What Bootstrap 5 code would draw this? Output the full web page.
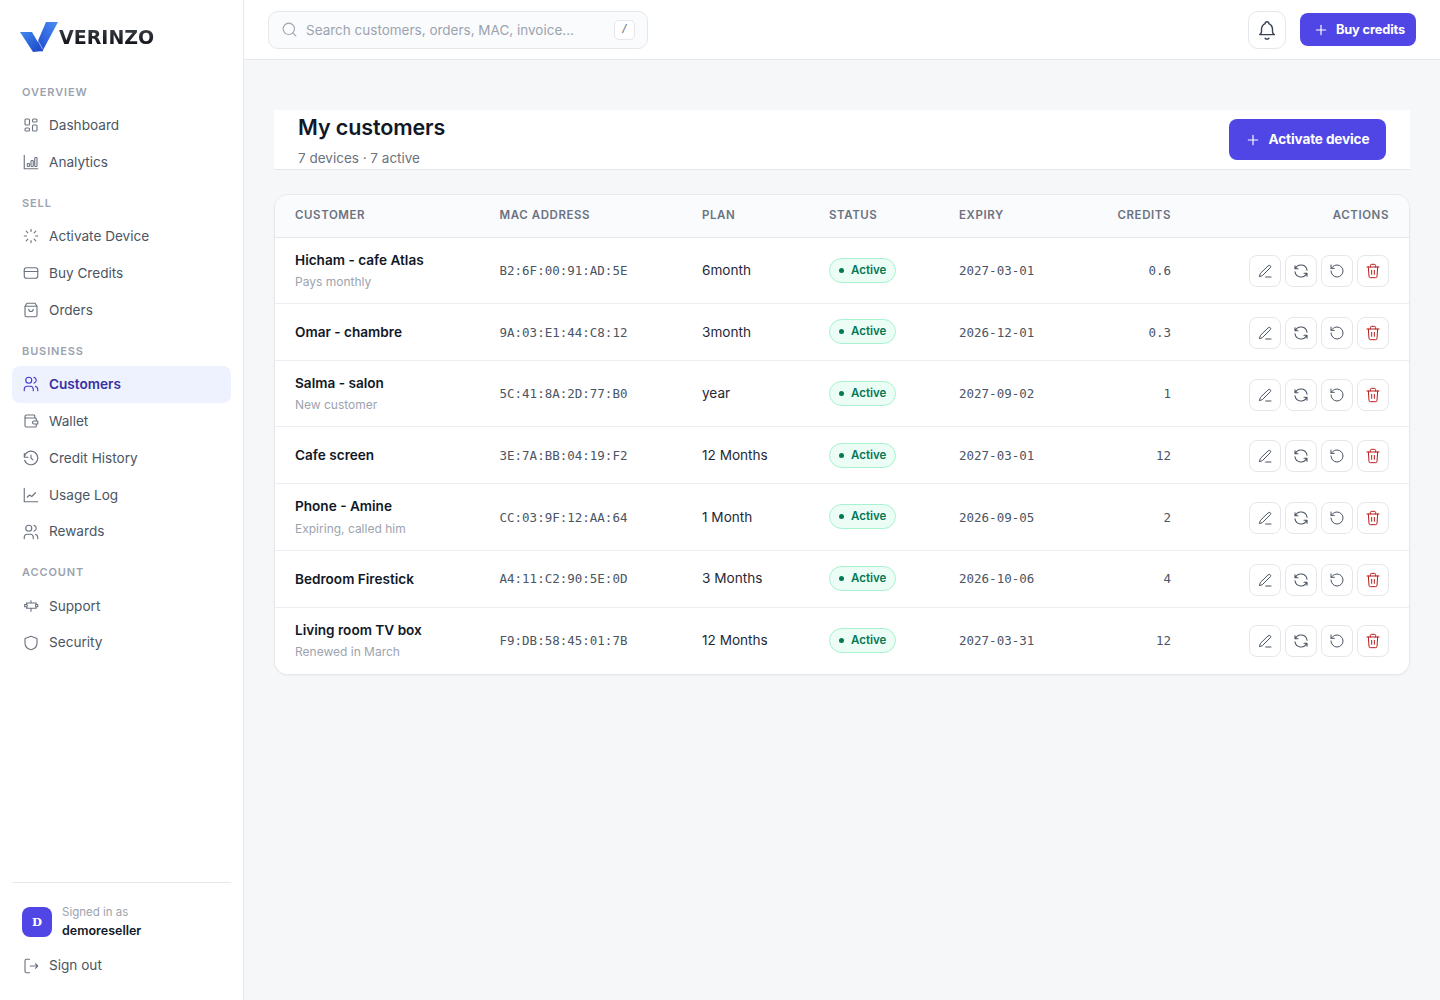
<!DOCTYPE html>
<html lang="en">
<head>
    <meta charset="UTF-8">
    <meta name="viewport" content="width=device-width, initial-scale=1.0">
    <title>My customers</title>
    <link href="https://cdn.jsdelivr.net/npm/bootstrap@5.3.0/dist/css/bootstrap.min.css" rel="stylesheet">
    <style>
        body { font-family: Inter, "Liberation Sans", sans-serif; background: #f5f7f9; color: #111827; font-size: 13.6px; }
        .ico { width: 18px; height: 18px; fill: none; stroke: currentColor; stroke-width: 1.5; stroke-linecap: round; stroke-linejoin: round; flex: none; }

        /* Sidebar */
        .side { width: 244px; height: 100vh; flex: none; background: #fff; border-right: 1px solid #e5e7eb; padding: 0 12px 16px; }
        .logo-row { height: 73px; padding: 0 0 0 8px; }
        .logo-text { font-family: "DejaVu Sans", sans-serif; font-weight: 700; font-size: 19px; line-height: 1; margin: 2px 0 0 1px; background: linear-gradient(#3b4048, #0b0d12); -webkit-background-clip: text; background-clip: text; color: transparent; }
        .side-label { font-size: 11px; font-weight: 600; letter-spacing: .08em; color: #9ca3af; padding: 0 10px; line-height: 13px; margin: 13px 0 8px; }
        .side-label.later { margin-top: 16.5px; }
        .side .nav-link { display: flex; align-items: center; gap: 9px; height: 36.8px; padding: 0 10px; color: #4b5563; font-size: 13.6px; border-radius: 8px; }
        .side .nav-link .ico { color: #6b7280; }
        .side .nav-link.active { background: #eef2ff; color: #3730a3; font-weight: 600; }
        .side .nav-link.active .ico { color: #4338ca; }
        .side-foot { border-top: 1px solid #e5e7eb; padding-top: 21px; }
        .avatar { width: 30px; height: 30px; border-radius: 8px; background: #4f46e5; color: #fff; font-family: "DejaVu Serif", serif; font-weight: 700; font-size: 11.5px; }
        .who { padding: 0 10px; gap: 10px; margin-bottom: 7px; }
        .who-top { font-size: 11.5px; line-height: 16px; color: #9ca3af; }
        .who-name { font-size: 12.5px; line-height: 18px; margin-top: 2px; font-weight: 600; color: #111827; }

        /* Topbar */
        .topbar { height: 60px; background: #fff; border-bottom: 1px solid #e5e7eb; padding: 0 24px; }
        .search-box { width: 380px; height: 38px; border: 1px solid #e5e7eb; border-radius: 10px; background: #fafbfd; padding: 0 12px; gap: 8px; color: #9ca3af; }
        .search-box .ico { width: 17px; height: 17px; }
        .search-input { border: 0; background: none; outline: 0; flex: 1; min-width: 0; font-size: 13.5px; color: #111827; padding: 2px 0 0; }
        .search-input::placeholder { color: #9ca3af; opacity: 1; }
        .slash { width: 21px; height: 20px; border: 1px solid #e5e7eb; border-radius: 5px; background: #fff; font-family: "DejaVu Sans Mono", monospace; font-size: 11px; color: #6b7280; }
        .bell-btn { width: 38px; height: 38px; padding: 0; border: 1px solid #e5e7eb; border-radius: 10px; background: #fff; color: #374151; }
        .bell-btn .ico { width: 22px; height: 22px; }
        .top-actions { gap: 14px; }
        .btn-indigo { background: #4f46e5; border: 0; color: #fff; font-weight: 700; letter-spacing: -.01em; }
        .btn-indigo:hover { background: #4338ca; color: #fff; }
        .buy-btn { height: 33px; width: 116px; font-size: 12.8px; border-radius: 8px; padding: 0 0 0 3px; gap: 8px; }
        .plus-ico { width: 14px; height: 14px; stroke-width: 2; }

        /* Content */
        .content { padding: 50px 30px 30px; }
        .page-head { height: 60px; background: #fff; border-bottom: 1px solid #e5e7eb; padding: 0 24px; margin-bottom: 24px; }
        .page-title { font-size: 21.5px; font-weight: 600; line-height: 28px; margin: 0 0 8px; color: #111827; letter-spacing: -.005em; }
        .page-sub { font-size: 13.5px; line-height: 18px; color: #6b7280; }
        .activate-btn { width: 157px; height: 41px; font-size: 13.6px; border-radius: 8px; padding: 0; gap: 9px; }
        .cust-card { background: #fff; border: 1px solid #e5e7eb; border-radius: 14px; overflow: hidden; box-shadow: 0 1px 2px rgba(16, 24, 40, .04); }

        /* Table */
        .cust-table { table-layout: fixed; width: 1134px; }
        .cust-table.table > :not(caption) > * > * { padding: 12px 20px; border-bottom: 1px solid #eceef1; background: #fff; box-shadow: none; vertical-align: middle; font-size: 13.6px; color: #1f2937; }
        .cust-table.table > tbody > tr:last-child > * { border-bottom-color: #fff; }
        .cust-table.table > thead > tr > th { height: 42px; padding-top: 0; padding-bottom: 0; background: #fafbfd; border-bottom-color: #e5e7eb; font-size: 11.5px; font-weight: 600; letter-spacing: .05em; color: #6b7280; text-transform: uppercase; }
        .cust-name { font-weight: 600; color: #111827; line-height: 20px; }
        .cust-note { font-size: 12px; line-height: 18px; margin-top: 3.4px; color: #9ca3af; }
        .cust-table.table > tbody > tr > td.mono { font-family: "DejaVu Sans Mono", "Liberation Mono", monospace; font-size: 12.5px; color: #4b5563; padding-top: 13px; padding-bottom: 11px; }
        .cust-table.table > tbody > tr > td.act-cell { padding-top: 13px; padding-bottom: 11px; }
        .pill { height: 25px; width: 67px; border: 1px solid #a7f3d0; border-radius: 13px; background: #ecfdf5; color: #047857; font-size: 11.5px; font-weight: 600; gap: 7px; padding-left: 9px; }
        .pill-dot { width: 5px; height: 5px; border-radius: 50%; background: #047857; }
        .act-btn { width: 32px; height: 32px; padding: 0; background: #fff; border: 1px solid #e5e7eb; border-radius: 8px; color: #4b5563; }
        .act-btn .ico { width: 16px; height: 16px; }
        .act-btn .ico.wide { width: 18px; height: 18px; }
        .act-btn.danger { color: #b91c1c; }
    </style>
</head>
<body>
    <svg width="0" height="0" class="position-absolute">
        <symbol id="i-dash" viewBox="0 0 24 24"><rect x="4" y="4" width="6" height="8" rx="1.5"/><rect x="4" y="16" width="6" height="4" rx="1.5"/><rect x="14" y="12" width="6" height="8" rx="1.5"/><rect x="14" y="4" width="6" height="4" rx="1.5"/></symbol>
        <symbol id="i-bars" viewBox="0 0 24 24"><path d="M3 3v18h18"/><rect x="7" y="14" width="3" height="4" rx="1"/><rect x="12" y="10" width="3" height="8" rx="1"/><rect x="17" y="6" width="3" height="12" rx="1"/></symbol>
        <symbol id="i-load" viewBox="0 0 24 24"><path d="M12 6V3M16.25 7.75 18.4 5.6M18 12h3M16.25 16.25l2.15 2.15M12 18v3M7.75 16.25 5.6 18.4M6 12H3M7.75 7.75 5.6 5.6"/></symbol>
        <symbol id="i-card" viewBox="0 0 24 24"><rect x="3" y="5" width="18" height="14" rx="3"/><path d="M3 10h18"/></symbol>
        <symbol id="i-bag" viewBox="0 0 24 24"><path d="M6.500 3h11L20 7v12a2 2 0 0 1-2 2H6a2 2 0 0 1-2-2V7zM4 7h16M9 11a3 3 0 0 0 6 0"/></symbol>
        <symbol id="i-users" viewBox="0 0 24 24"><circle cx="9" cy="7" r="4"/><path d="M3 21v-2a4 4 0 0 1 4-4h4a4 4 0 0 1 4 4v2M16 3.130a4 4 0 0 1 0 7.750M21 21v-2a4 4 0 0 0-3-3.850"/></symbol>
        <symbol id="i-wallet" viewBox="0 0 24 24"><path d="M17 8V5a1 1 0 0 0-1-1H6a2 2 0 0 0-2 2v12a2 2 0 0 0 2 2h12a1 1 0 0 0 1-1v-3M4 6a2 2 0 0 0 2 2h12a1 1 0 0 1 1 1v3M21 12v4h-5a2 2 0 0 1 0-4z"/></symbol>
        <symbol id="i-hist" viewBox="0 0 24 24"><path d="M12 8v4l2.500 2.500M3.050 11a9 9 0 1 1 .5 4M3.050 6v5h5"/></symbol>
        <symbol id="i-line" viewBox="0 0 24 24"><path d="M3 3v18h18M7 15l3-3 3 2 5-5"/></symbol>
        <symbol id="i-sign" viewBox="0 0 24 24"><path d="M6 8h13l-1 3.500 1 3.500H6l1-3.500zM12 5v3M12 15v4M6 10H3.500v3H6M19 10h2v3h-2"/></symbol>
        <symbol id="i-shield" viewBox="0 0 24 24"><path d="M12 3l8 3v6c0 5-3.500 8-8 9-4.500-1-8-4-8-9V6z"/></symbol>
        <symbol id="i-out" viewBox="0 0 24 24"><path d="M10 3H6a2 2 0 0 0-2 2v14a2 2 0 0 0 2 2h4M11 12h10M18 9l3 3-3 3"/></symbol>
        <symbol id="i-search" viewBox="0 0 24 24"><circle cx="11" cy="11" r="8"/><path d="m21 21-4.300-4.300"/></symbol>
        <symbol id="i-bell" viewBox="0 0 24 24"><path d="M10 5a2 2 0 1 1 4 0 7 7 0 0 1 4 6v3a4 4 0 0 0 2 3H4a4 4 0 0 0 2-3v-3a7 7 0 0 1 4-6M10 21a2.500 2.500 0 0 0 4 0"/></symbol>
        <symbol id="i-plus" viewBox="0 0 24 24"><path d="M12 4v16M4 12h16"/></symbol>
        <symbol id="i-pen" viewBox="0 0 24 24"><path d="M16.900 4.100a2.100 2.100 0 0 1 3 3L8 19l-4.500 1.500L5 16zM13 21h8"/></symbol>
        <symbol id="i-sync" viewBox="0 0 24 24"><path d="M20 11A8.100 8.100 0 0 0 4.500 9M4 5v4h4M4 13a8.100 8.100 0 0 0 15.500 2M20 19v-4h-4"/></symbol>
        <symbol id="i-undo" viewBox="0 0 24 24"><path d="M3 12a9 9 0 1 0 9-9 9.750 9.750 0 0 0-6.740 2.740L3 8M3 3v5h5"/></symbol>
        <symbol id="i-trash" viewBox="0 0 24 24"><path d="M3 6h18M8 6V4a2 2 0 0 1 2-2h4a2 2 0 0 1 2 2v2M19 6l-1 14a2 2 0 0 1-2 2H8a2 2 0 0 1-2-2L5 6M10 11v6M14 11v6"/></symbol>
    </svg>

    <div class="d-flex">
        <aside class="side d-flex flex-column">
            <div class="logo-row d-flex align-items-center">
                <svg width="38" height="30" viewBox="0 0 38 30">
                    <defs>
                        <linearGradient id="lg-a" x1="0" y1="0" x2="1" y2="1"><stop offset="0" stop-color="#3f8cf0"/><stop offset="1" stop-color="#1d3fc4"/></linearGradient>
                        <linearGradient id="lg-b" x1="1" y1="0" x2="0" y2="1"><stop offset="0" stop-color="#4a90f2"/><stop offset="1" stop-color="#1f46cf"/></linearGradient>
                    </defs>
                    <polygon points="0,10 12,10 23,29 13,30" fill="url(#lg-a)"/>
                    <polygon points="26,0 38,0 22,30 17,21" fill="url(#lg-b)"/>
                    <path d="M14 11 22.500 27" stroke="#fff" stroke-width=".7" stroke-opacity=".7"/>
                </svg>
                <span class="logo-text">VERINZO</span>
            </div>

            <div class="side-label">OVERVIEW</div>
            <nav class="nav flex-column">
                <a class="nav-link" href="#"><svg class="ico"><use href="#i-dash"/></svg>Dashboard</a>
                <a class="nav-link" href="#"><svg class="ico"><use href="#i-bars"/></svg>Analytics</a>
            </nav>

            <div class="side-label later">SELL</div>
            <nav class="nav flex-column">
                <a class="nav-link" href="#"><svg class="ico"><use href="#i-load"/></svg>Activate Device</a>
                <a class="nav-link" href="#"><svg class="ico"><use href="#i-card"/></svg>Buy Credits</a>
                <a class="nav-link" href="#"><svg class="ico"><use href="#i-bag"/></svg>Orders</a>
            </nav>

            <div class="side-label later">BUSINESS</div>
            <nav class="nav flex-column">
                <a class="nav-link active" href="#"><svg class="ico"><use href="#i-users"/></svg>Customers</a>
                <a class="nav-link" href="#"><svg class="ico"><use href="#i-wallet"/></svg>Wallet</a>
                <a class="nav-link" href="#"><svg class="ico"><use href="#i-hist"/></svg>Credit History</a>
                <a class="nav-link" href="#"><svg class="ico"><use href="#i-line"/></svg>Usage Log</a>
                <a class="nav-link" href="#"><svg class="ico"><use href="#i-users"/></svg>Rewards</a>
            </nav>

            <div class="side-label later">ACCOUNT</div>
            <nav class="nav flex-column">
                <a class="nav-link" href="#"><svg class="ico"><use href="#i-sign"/></svg>Support</a>
                <a class="nav-link" href="#"><svg class="ico"><use href="#i-shield"/></svg>Security</a>
            </nav>

            <div class="side-foot mt-auto">
                <div class="who d-flex align-items-center">
                    <div class="avatar d-flex align-items-center justify-content-center">D</div>
                    <div>
                        <div class="who-top">Signed in as</div>
                        <div class="who-name">demoreseller</div>
                    </div>
                </div>
                <a class="nav-link" href="#"><svg class="ico"><use href="#i-out"/></svg>Sign out</a>
            </div>
        </aside>

        <div class="flex-grow-1">
            <header class="topbar d-flex align-items-center justify-content-between">
                <div class="search-box d-flex align-items-center">
                    <svg class="ico"><use href="#i-search"/></svg>
                    <input class="search-input" type="text" placeholder="Search customers, orders, MAC, invoice...">
                    <span class="slash d-flex align-items-center justify-content-center">/</span>
                </div>
                <div class="top-actions d-flex align-items-center">
                    <button class="btn bell-btn d-flex align-items-center justify-content-center"><svg class="ico"><use href="#i-bell"/></svg></button>
                    <button class="btn btn-indigo buy-btn d-flex align-items-center justify-content-center"><svg class="ico plus-ico"><use href="#i-plus"/></svg>Buy credits</button>
                </div>
            </header>

            <main class="content">
                <div class="page-head d-flex align-items-center justify-content-between">
                    <div>
                        <h1 class="page-title">My customers</h1>
                        <div class="page-sub">7 devices · 7 active</div>
                    </div>
                    <button class="btn btn-indigo activate-btn d-flex align-items-center justify-content-center"><svg class="ico plus-ico"><use href="#i-plus"/></svg>Activate device</button>
                </div>

                <div class="cust-card">
                    <table class="table cust-table mb-0">
                        <colgroup>
                            <col style="width:204.5px"><col style="width:202.5px"><col style="width:127px"><col style="width:130px"><col style="width:139px"><col style="width:113px"><col style="width:218px">
                        </colgroup>
                        <thead>
                            <tr>
                                <th>Customer</th>
                                <th>MAC address</th>
                                <th>Plan</th>
                                <th>Status</th>
                                <th>Expiry</th>
                                <th class="text-end">Credits</th>
                                <th class="text-end">Actions</th>
                            </tr>
                        </thead>
                        <tbody>
                            <tr>
                                <td><div class="cust-name">Hicham - cafe Atlas</div><div class="cust-note">Pays monthly</div></td>
                                <td class="mono">B2:6F:00:91:AD:5E</td>
                                <td>6month</td>
                                <td><span class="pill d-inline-flex align-items-center"><span class="pill-dot"></span>Active</span></td>
                                <td class="mono">2027-03-01</td>
                                <td class="mono text-end">0.6</td>
                                <td class="act-cell"><div class="d-flex justify-content-end gap-1">
                                    <button class="btn act-btn d-flex align-items-center justify-content-center"><svg class="ico"><use href="#i-pen"/></svg></button>
                                    <button class="btn act-btn d-flex align-items-center justify-content-center"><svg class="ico wide"><use href="#i-sync"/></svg></button>
                                    <button class="btn act-btn d-flex align-items-center justify-content-center"><svg class="ico"><use href="#i-undo"/></svg></button>
                                    <button class="btn act-btn danger d-flex align-items-center justify-content-center"><svg class="ico"><use href="#i-trash"/></svg></button>
                                </div></td>
                            </tr>
                            <tr>
                                <td><div class="cust-name">Omar - chambre</div></td>
                                <td class="mono">9A:03:E1:44:C8:12</td>
                                <td>3month</td>
                                <td><span class="pill d-inline-flex align-items-center"><span class="pill-dot"></span>Active</span></td>
                                <td class="mono">2026-12-01</td>
                                <td class="mono text-end">0.3</td>
                                <td class="act-cell"><div class="d-flex justify-content-end gap-1">
                                    <button class="btn act-btn d-flex align-items-center justify-content-center"><svg class="ico"><use href="#i-pen"/></svg></button>
                                    <button class="btn act-btn d-flex align-items-center justify-content-center"><svg class="ico wide"><use href="#i-sync"/></svg></button>
                                    <button class="btn act-btn d-flex align-items-center justify-content-center"><svg class="ico"><use href="#i-undo"/></svg></button>
                                    <button class="btn act-btn danger d-flex align-items-center justify-content-center"><svg class="ico"><use href="#i-trash"/></svg></button>
                                </div></td>
                            </tr>
                            <tr>
                                <td><div class="cust-name">Salma - salon</div><div class="cust-note">New customer</div></td>
                                <td class="mono">5C:41:8A:2D:77:B0</td>
                                <td>year</td>
                                <td><span class="pill d-inline-flex align-items-center"><span class="pill-dot"></span>Active</span></td>
                                <td class="mono">2027-09-02</td>
                                <td class="mono text-end">1</td>
                                <td class="act-cell"><div class="d-flex justify-content-end gap-1">
                                    <button class="btn act-btn d-flex align-items-center justify-content-center"><svg class="ico"><use href="#i-pen"/></svg></button>
                                    <button class="btn act-btn d-flex align-items-center justify-content-center"><svg class="ico wide"><use href="#i-sync"/></svg></button>
                                    <button class="btn act-btn d-flex align-items-center justify-content-center"><svg class="ico"><use href="#i-undo"/></svg></button>
                                    <button class="btn act-btn danger d-flex align-items-center justify-content-center"><svg class="ico"><use href="#i-trash"/></svg></button>
                                </div></td>
                            </tr>
                            <tr>
                                <td><div class="cust-name">Cafe screen</div></td>
                                <td class="mono">3E:7A:BB:04:19:F2</td>
                                <td>12 Months</td>
                                <td><span class="pill d-inline-flex align-items-center"><span class="pill-dot"></span>Active</span></td>
                                <td class="mono">2027-03-01</td>
                                <td class="mono text-end">12</td>
                                <td class="act-cell"><div class="d-flex justify-content-end gap-1">
                                    <button class="btn act-btn d-flex align-items-center justify-content-center"><svg class="ico"><use href="#i-pen"/></svg></button>
                                    <button class="btn act-btn d-flex align-items-center justify-content-center"><svg class="ico wide"><use href="#i-sync"/></svg></button>
                                    <button class="btn act-btn d-flex align-items-center justify-content-center"><svg class="ico"><use href="#i-undo"/></svg></button>
                                    <button class="btn act-btn danger d-flex align-items-center justify-content-center"><svg class="ico"><use href="#i-trash"/></svg></button>
                                </div></td>
                            </tr>
                            <tr>
                                <td><div class="cust-name">Phone - Amine</div><div class="cust-note">Expiring, called him</div></td>
                                <td class="mono">CC:03:9F:12:AA:64</td>
                                <td>1 Month</td>
                                <td><span class="pill d-inline-flex align-items-center"><span class="pill-dot"></span>Active</span></td>
                                <td class="mono">2026-09-05</td>
                                <td class="mono text-end">2</td>
                                <td class="act-cell"><div class="d-flex justify-content-end gap-1">
                                    <button class="btn act-btn d-flex align-items-center justify-content-center"><svg class="ico"><use href="#i-pen"/></svg></button>
                                    <button class="btn act-btn d-flex align-items-center justify-content-center"><svg class="ico wide"><use href="#i-sync"/></svg></button>
                                    <button class="btn act-btn d-flex align-items-center justify-content-center"><svg class="ico"><use href="#i-undo"/></svg></button>
                                    <button class="btn act-btn danger d-flex align-items-center justify-content-center"><svg class="ico"><use href="#i-trash"/></svg></button>
                                </div></td>
                            </tr>
                            <tr>
                                <td><div class="cust-name">Bedroom Firestick</div></td>
                                <td class="mono">A4:11:C2:90:5E:0D</td>
                                <td>3 Months</td>
                                <td><span class="pill d-inline-flex align-items-center"><span class="pill-dot"></span>Active</span></td>
                                <td class="mono">2026-10-06</td>
                                <td class="mono text-end">4</td>
                                <td class="act-cell"><div class="d-flex justify-content-end gap-1">
                                    <button class="btn act-btn d-flex align-items-center justify-content-center"><svg class="ico"><use href="#i-pen"/></svg></button>
                                    <button class="btn act-btn d-flex align-items-center justify-content-center"><svg class="ico wide"><use href="#i-sync"/></svg></button>
                                    <button class="btn act-btn d-flex align-items-center justify-content-center"><svg class="ico"><use href="#i-undo"/></svg></button>
                                    <button class="btn act-btn danger d-flex align-items-center justify-content-center"><svg class="ico"><use href="#i-trash"/></svg></button>
                                </div></td>
                            </tr>
                            <tr>
                                <td><div class="cust-name">Living room TV box</div><div class="cust-note">Renewed in March</div></td>
                                <td class="mono">F9:DB:58:45:01:7B</td>
                                <td>12 Months</td>
                                <td><span class="pill d-inline-flex align-items-center"><span class="pill-dot"></span>Active</span></td>
                                <td class="mono">2027-03-31</td>
                                <td class="mono text-end">12</td>
                                <td class="act-cell"><div class="d-flex justify-content-end gap-1">
                                    <button class="btn act-btn d-flex align-items-center justify-content-center"><svg class="ico"><use href="#i-pen"/></svg></button>
                                    <button class="btn act-btn d-flex align-items-center justify-content-center"><svg class="ico wide"><use href="#i-sync"/></svg></button>
                                    <button class="btn act-btn d-flex align-items-center justify-content-center"><svg class="ico"><use href="#i-undo"/></svg></button>
                                    <button class="btn act-btn danger d-flex align-items-center justify-content-center"><svg class="ico"><use href="#i-trash"/></svg></button>
                                </div></td>
                            </tr>
                        </tbody>
                    </table>
                </div>
            </main>
        </div>
    </div>
</body>
</html>
